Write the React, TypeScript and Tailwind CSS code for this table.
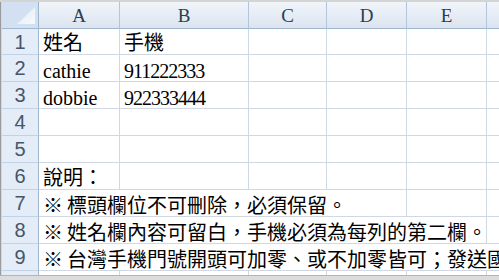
import React from "react";

const hdr = "flex items-center justify-center border-r border-b border-r-[#b1c5dc] border-b-[#9eb6ce] bg-gradient-to-b from-[#f1f5fa] to-[#dbe4ef] text-[#2b3f52] font-['Liberation_Serif',serif] text-[19px] leading-none";
const rowHdr = "flex items-center justify-center border-r border-b border-r-[#9eb6ce] border-b-[#c2d2e5] bg-[#e4ecf7] text-[#44566a] font-['Liberation_Sans',sans-serif] text-[20px] leading-none font-light";
const cell = "border-r border-b border-[#d0d7e5] bg-white";
const textCell = "flex items-end whitespace-nowrap overflow-visible pl-[4px] text-black font-['Liberation_Serif','Noto_Sans_CJK_TC',serif] leading-none";

function EmptyCells({ n }: { n: number }) {
  return (
    <>
      {Array.from({ length: n }).map((_, i) => (
        <div key={i} className={cell} />
      ))}
    </>
  );
}

function Note({ text }: { text: string }) {
  return (
    <>
      <span className="inline-block w-[24px] shrink-0 font-['Noto_Sans_CJK_TC',sans-serif]">※</span>
      <span className="font-['Noto_Sans_CJK_TC',sans-serif]">{text}</span>
    </>
  );
}

export default function App() {
  return (
    <div className="w-[499px] h-[280px] overflow-hidden bg-[#d4d4d4] flex flex-col">
      <div className="flex-1 pt-[2px] flex">
        <div className="w-[2px] flex">
          <div className="w-[1px] bg-[#9a9a9a]" />
          <div className="w-[1px] bg-[#d8d8d8]" />
        </div>
        <div className="w-[525px] grid grid-cols-[37px_81px_129px_78px_80px_80px_40px] grid-rows-[27px_26px_27px_27px_27px_27px_27px_27px_27px_27px_4px]">
          {/* header row */}
          <div className="relative border-r border-b border-[#9eb6ce] bg-[#d2e0f1]">
            <svg className="absolute left-0 top-0" width="36" height="26" viewBox="0 0 36 26">
              <defs>
                <linearGradient id="tri" x1="0" y1="0" x2="1" y2="1">
                  <stop offset="0" stopColor="#dfe9f5" />
                  <stop offset="1" stopColor="#f7fafd" />
                </linearGradient>
              </defs>
              <polygon points="33,5 33,22 15,22" fill="url(#tri)" />
            </svg>
          </div>
          <div className={hdr}>A</div>
          <div className={hdr}>B</div>
          <div className={hdr}>C</div>
          <div className={hdr}>D</div>
          <div className={hdr}>E</div>
          <div className={hdr}>F</div>

          {/* row 1 */}
          <div className={rowHdr}>1</div>
          <div className={`${cell} ${textCell} text-[20px] pb-[1px]`}>姓名</div>
          <div className={`${cell} ${textCell} text-[20px] pb-[1px] pl-[2px]`}>手機</div>
          <EmptyCells n={4} />

          {/* row 2 */}
          <div className={rowHdr}>2</div>
          <div className={`${cell} ${textCell} text-[20px]`}>cathie</div>
          <div className={`${cell} ${textCell} text-[20px] tracking-[-1px] pl-[2px]`}>911222333</div>
          <EmptyCells n={4} />

          {/* row 3 */}
          <div className={rowHdr}>3</div>
          <div className={`${cell} ${textCell} text-[20px]`}>dobbie</div>
          <div className={`${cell} ${textCell} text-[20px] tracking-[-1px] pl-[2px]`}>922333444</div>
          <EmptyCells n={4} />

          {/* row 4 */}
          <div className={rowHdr}>4</div>
          <EmptyCells n={6} />

          {/* row 5 */}
          <div className={rowHdr}>5</div>
          <EmptyCells n={6} />

          {/* row 6 */}
          <div className={rowHdr}>6</div>
          <div className={`${cell} ${textCell} text-[20px] pb-[1px]`}>說明：</div>
          <EmptyCells n={5} />

          {/* row 7 */}
          <div className={rowHdr}>7</div>
          <div className={`${cell} ${textCell} col-span-4 text-[20px] pb-[1px] pl-[3px]`}>
            <Note text="標頭欄位不可刪除，必須保留。" />
          </div>
          <EmptyCells n={2} />

          {/* row 8 */}
          <div className={rowHdr}>8</div>
          <div className={`${cell} ${textCell} col-span-5 text-[20px] pb-[1px] pl-[3px]`}>
            <Note text="姓名欄內容可留白，手機必須為每列的第二欄。" />
          </div>
          <EmptyCells n={1} />

          {/* row 9 */}
          <div className={rowHdr}>9</div>
          <div className={`${cell} ${textCell} col-span-6 text-[20px] pb-[1px] pl-[3px]`}>
            <Note text="台灣手機門號開頭可加零、或不加零皆可；發送國際簡訊時請加國碼。" />
          </div>

          {/* row 10 partial */}
          <div className="border-r border-[#9eb6ce] bg-[#e4ecf7]" />
          <div className="border-r border-[#d0d7e5] bg-white" />
          <div className="border-r border-[#d0d7e5] bg-white" />
          <div className="border-r border-[#d0d7e5] bg-white" />
          <div className="border-r border-[#d0d7e5] bg-white" />
          <div className="border-r border-[#d0d7e5] bg-white" />
          <div className="border-r border-[#d0d7e5] bg-white" />
        </div>
      </div>
      <div className="h-[5px] border-t border-[#b5b5b5] bg-[#dcdcdc]" />
    </div>
  );
}
